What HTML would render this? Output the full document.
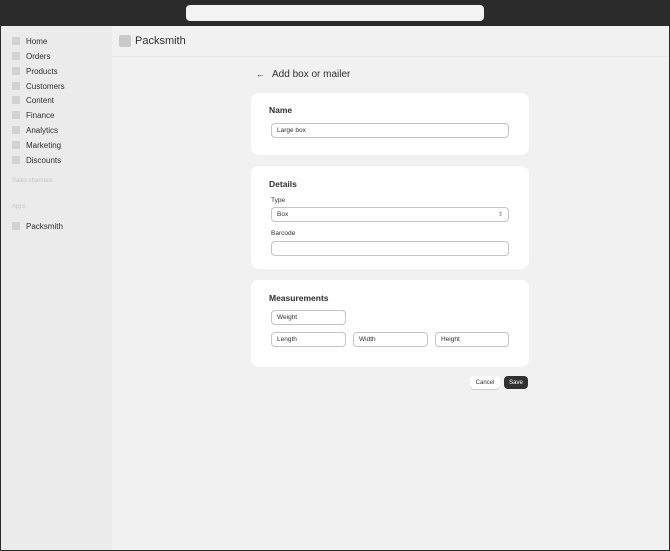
<!DOCTYPE html>
<html><head><style>
*{box-sizing:border-box;margin:0;padding:0}
body{width:670px;height:551px;overflow:hidden;font-family:"Liberation Sans",sans-serif;background:#2a2a2a;position:relative;color:#303030}
.top{position:absolute;left:0;top:0;width:670px;height:26px;background:#2b2b2b}
.search{position:absolute;left:186px;top:5px;width:298px;height:16px;background:#f3f3f3;border-radius:4px}
.side{position:absolute;left:1px;top:26px;width:111px;height:524px;background:#ebebeb}
.main{position:absolute;left:112px;top:26px;width:557px;height:524px;background:#f1f1f1}
.hdr{position:absolute;left:0;top:0;width:557px;height:31px;border-bottom:1px solid #e6e6e6}
.hdr .ic{position:absolute;left:7px;top:9px;width:12px;height:12px;background:#c9c9c9;border-radius:2px}
.hdr span{position:absolute;left:23px;top:9px;font-size:11px;color:#303030}
.nav{position:absolute;left:11px;font-size:8px;color:#303030}
.nav i{display:inline-block;width:8px;height:8px;background:#d2d2d2;margin-right:6px;vertical-align:-1px}
.sec{position:absolute;left:11px;font-size:6px;color:#c4c4c4}
.abs{position:absolute}
.card{position:absolute;left:251px;width:278px;background:#fff;border-radius:8px}
.ct{position:absolute;left:18px;font-size:8.5px;font-weight:bold;color:#303030}
.in{position:absolute;height:15px;border:1px solid #c4c4c4;border-radius:4px;background:#fff;font-size:6.5px;padding-left:5px;line-height:14px;color:#303030}
.lb{position:absolute;left:20px;font-size:6.5px;color:#303030}
.btn{position:absolute;display:flex;align-items:center;justify-content:center;border-radius:4px;font-size:6px}
</style></head><body>
<div class="top"><div class="search"></div></div>
<div class="side">
<div class="nav" style="top:11px"><i></i>Home</div>
<div class="nav" style="top:26px"><i></i>Orders</div>
<div class="nav" style="top:41px"><i></i>Products</div>
<div class="nav" style="top:56px"><i></i>Customers</div>
<div class="nav" style="top:70px"><i></i>Content</div>
<div class="nav" style="top:85px"><i></i>Finance</div>
<div class="nav" style="top:100px"><i></i>Analytics</div>
<div class="nav" style="top:115px"><i></i>Marketing</div>
<div class="nav" style="top:130px"><i></i>Discounts</div>
<div class="sec" style="top:152px">Sales channels</div>
<div class="sec" style="top:178px">Apps</div>
<div class="nav" style="top:196px"><i></i>Packsmith</div>
</div>
<div class="main"><div class="hdr"><div class="ic"></div><span>Packsmith</span></div></div>
<div class="abs" style="left:256px;top:69px;font-size:9px">←</div>
<div class="abs" style="left:272px;top:69px;font-size:10px;color:#303030">Add box or mailer</div>
<div class="card" style="top:93px;height:62px">
<div class="ct" style="top:12px">Name</div>
<div class="in" style="left:20px;top:30px;width:238px">Large box</div>
</div>
<div class="card" style="top:166px;height:103px">
<div class="ct" style="top:13px">Details</div>
<div class="lb" style="top:31px">Type</div>
<div class="in" style="left:20px;top:41px;width:238px">Box<span style="position:absolute;right:5px;top:0;font-size:6px;color:#777">⇕</span></div>
<div class="lb" style="top:64px">Barcode</div>
<div class="in" style="left:20px;top:75px;width:238px"></div>
</div>
<div class="card" style="top:280px;height:87px">
<div class="ct" style="top:13px">Measurements</div>
<div class="in" style="left:20px;top:30px;width:75px">Weight</div>
<div class="in" style="left:20px;top:52px;width:75px">Length</div>
<div class="in" style="left:102px;top:52px;width:75px">Width</div>
<div class="in" style="left:184px;top:52px;width:74px">Height</div>
</div>
<div class="btn" style="left:470px;top:376px;width:30px;height:13px;background:#fff;box-shadow:0 1px 0 #ccc">Cancel</div>
<div class="btn" style="left:504px;top:376px;width:24px;height:13px;background:#303030;color:#fff">Save</div>
</body></html>
